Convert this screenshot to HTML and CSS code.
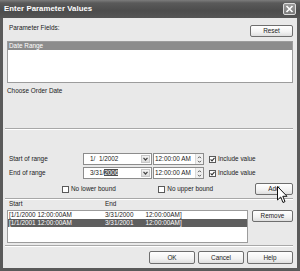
FILE: index.html
```html
<!DOCTYPE html>
<html>
<head>
<meta charset="utf-8">
<link rel="stylesheet" href="styles.css">
</head>
<body>
<div class="window">
  <div class="titlebar">
    <span class="title">Enter Parameter Values</span>
    <div class="close"><svg width="9" height="8" viewBox="0 0 9 8"><path d="M1.5 1 L7.5 7 M7.5 1 L1.5 7" stroke="#fff" stroke-width="1.6" fill="none"/></svg></div>
  </div>
  <div class="body">
    <div class="toprow">
      <span class="lbl">Parameter Fields:</span>
      <div class="btn reset">Reset</div>
    </div>
    <div class="listbox fields">
      <div class="item sel">Date Range</div>
    </div>
    <div class="desc">Choose Order Date</div>
    <div class="sep first"></div>

    <div class="frow r1">
      <span class="rlabel">Start of range</span>
      <div class="combo"><span class="val">1/&nbsp;&nbsp;1/2002</span><span class="drop"><svg width="5" height="4" viewBox="0 0 5 4"><path d="M0.5 0.8 L2.5 3 L4.5 0.8" stroke="#444" stroke-width="1.2" fill="none"/></svg></span></div>
      <div class="time"><span class="val">12:00:00 AM</span><span class="spin"><svg width="5" height="9" viewBox="0 0 5 9"><path d="M1 3.2 L2.5 1.7 L4 3.2 M1 5.8 L2.5 7.3 L4 5.8" stroke="#555" stroke-width="1" fill="none"/></svg></span></div>
      <span class="chk on"><svg width="5" height="5" viewBox="0 0 5 5"><path d="M0.6 2.4 L2 3.9 L4.5 0.8" stroke="#333" stroke-width="1.1" fill="none"/></svg></span>
      <span class="chklabel">Include value</span>
    </div>
    <div class="frow r2">
      <span class="rlabel">End of range</span>
      <div class="combo"><span class="val">3/31/<span class="hl">2006</span></span><span class="drop"><svg width="5" height="4" viewBox="0 0 5 4"><path d="M0.5 0.8 L2.5 3 L4.5 0.8" stroke="#444" stroke-width="1.2" fill="none"/></svg></span></div>
      <div class="time"><span class="val">12:00:00 AM</span><span class="spin"><svg width="5" height="9" viewBox="0 0 5 9"><path d="M1 3.2 L2.5 1.7 L4 3.2 M1 5.8 L2.5 7.3 L4 5.8" stroke="#555" stroke-width="1" fill="none"/></svg></span></div>
      <span class="chk on"><svg width="5" height="5" viewBox="0 0 5 5"><path d="M0.6 2.4 L2 3.9 L4.5 0.8" stroke="#333" stroke-width="1.1" fill="none"/></svg></span>
      <span class="chklabel">Include value</span>
    </div>
    <div class="frow bounds">
      <div class="bound lower"><span class="chk"></span><span class="chklabel">No lower bound</span></div>
      <div class="bound upper"><span class="chk"></span><span class="chklabel">No upper bound</span></div>
      <div class="btn add">Add</div>
    </div>
    <div class="sep second"></div>
    <div class="cols head"><span class="c1">Start</span><span class="c2">End</span></div>
    <div class="listrow">
      <div class="listbox ranges">
        <div class="cols item"><span class="c1">[1/1/2000 12:00:00AM</span><span class="c2">3/31/2000<span class="gap"></span>12:00:00AM]</span></div>
        <div class="cols item sel dark"><span class="c1">[1/1/2001 12:00:00AM</span><span class="c2">3/31/2001<span class="gap"></span>12:00:00AM]</span></div>
      </div>
      <div class="btn remove">Remove</div>
    </div>
    <div class="sep third"></div>
    <div class="footer">
      <div class="btn foot">OK</div>
      <div class="btn foot">Cancel</div>
      <div class="btn foot">Help</div>
    </div>
  </div>
  <svg class="cursor" width="11" height="18" viewBox="0 0 11 18"><path d="M0.5 0.5 L0.5 14 L3.7 11 L6 16.5 L8 15.6 L5.8 10.3 L10 10.3 Z" fill="#fff" stroke="#111" stroke-width="1" stroke-linejoin="round"/></svg>
</div>
</body>
</html>
```
FILE: styles.css
```css
* { box-sizing: border-box; margin: 0; padding: 0; }
html, body { width: 300px; height: 271px; overflow: hidden; }
body {
  font-family: "Liberation Sans", Arial, sans-serif;
  font-size: 6.4px;
  line-height: 8px;
  color: #1a1a1a;
  background: #5a5a5a;
}
.window {
  position: relative;
  width: 300px;
  height: 271px;
  background: #5a5a5a;
  display: flex;
  flex-direction: column;
  padding: 0 3px 3px;
}
.titlebar {
  height: 18px;
  margin: 0 -3px;
  padding: 0 4px 0 4px;
  display: flex;
  align-items: center;
  justify-content: space-between;
  background: linear-gradient(#7c7c7c 0, #5a5a5a 3px, #4c4c4c 60%, #555 100%);
}
.title { color: #fff; font-weight: bold; font-size: 7.8px; letter-spacing: 0.05px; }
.close {
  width: 13px; height: 12px;
  border: 1px solid #dcdcdc;
  border-radius: 2px;
  background: linear-gradient(#9a9a9a, #7a7a7a);
  display: flex; align-items: center; justify-content: center;
}
.body {
  flex: 1;
  background: #e9e9e9;
  padding: 0 4px;
  display: flex;
  flex-direction: column;
}
.btn {
  height: 12px;
  border: 1px solid #6e6e6e;
  border-radius: 2px;
  background: linear-gradient(#ffffff, #f2f2f2 60%, #dedede);
  display: flex; align-items: center; justify-content: center;
  color: #222;
}
.toprow { margin-top: 7px; height: 12px; display: flex; justify-content: space-between; align-items: flex-start; }
.lbl { padding-left: 2px; margin-top: -1px; }
.reset { width: 43px; }
.listbox { background: #fff; border: 1px solid #9c9c9c; }
.fields { margin-top: 4px; height: 42px; }
.item { height: 8px; line-height: 8px; padding-left: 1px; }
.sel { background: #8c8c8c; color: #fff; }
.sel.dark { background: #5e5e5e; }
.desc { margin-top: 4px; height: 8px; }
.sep { height: 2px; border-top: 1px solid #a8a8a8; border-bottom: 1px solid #fff; margin-left: -2px; }
.sep.first { margin-top: 33px; }
.frow { height: 12px; display: flex; align-items: center; }
.r1 { margin-top: 23px; }
.r2 { margin-top: 2px; }
.rlabel { width: 76px; padding-left: 2px; }
.combo, .time {
  height: 12px;
  border: 1px solid #8c8c8c;
  background: #fff;
  display: flex;
  align-items: stretch;
}
.combo { width: 69px; }
.combo .val { flex: 1; padding-left: 6px; line-height: 10px; }
.hl { background: #4e4e4e; color: #fff; }
.drop {
  width: 9px;
  margin: 1px;
  background: linear-gradient(#f4f4f4, #dcdcdc);
  border: 1px solid #c8c8c8;
  display: flex; align-items: center; justify-content: center;
}
.time { width: 51px; margin-left: 1px; }
.time .val { flex: 1; padding-left: 1px; line-height: 10px; }
.spin { width: 8px; display: flex; align-items: center; justify-content: center; background: #f0f0f0; border-left: 1px solid #d8d8d8; }
.chk {
  width: 7px; height: 7px;
  border: 1px solid #5a5a5a;
  background: #fff;
  display: inline-flex; align-items: center; justify-content: center;
  flex: none;
}
.frow > .chk { margin-left: 5px; }
.chklabel { margin-left: 2px; }
.bounds { margin-top: 4px; }
.bound { width: 98px; display: flex; align-items: center; }
.lower { margin-left: 55px; }
.add { width: 39px; margin-left: auto; }
.sep.second { margin-top: 3px; }
.cols { display: flex; }
.c1 { width: 96px; }
.c2 { white-space: nowrap; }
.gap { display: inline-block; width: 12px; }
.head { height: 8px; padding-left: 2px; }
.listrow { margin-top: 2px; display: flex; justify-content: space-between; align-items: flex-start; }
.ranges { width: 241px; height: 33px; }
.ranges .item { padding-left: 1px; }
.remove { width: 41px; }
.sep.third { margin-top: 2px; }
.footer { margin-top: 4px; display: flex; justify-content: flex-end; gap: 3px; }
.foot { width: 46px; height: 13px; }
.cursor { position: absolute; left: 277px; top: 186px; }
```
